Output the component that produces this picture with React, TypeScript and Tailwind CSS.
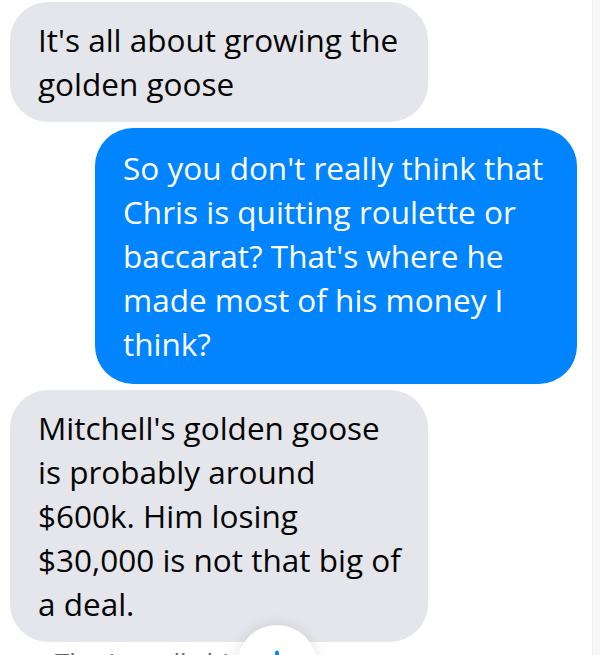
import { ArrowDown } from "lucide-react";

const font = { fontFamily: "'Open Sans', 'Noto Sans', sans-serif" };

function Bubble({ lines, mine }: { lines: string[]; mine?: boolean }) {
  return (
    <div
      className={
        mine
          ? "self-end mr-[15px] w-[482px] rounded-[38px] bg-[#0084ff] text-white px-[28px] py-[18px]"
          : "self-start ml-[10px] w-[418px] rounded-[38px] bg-[#e4e6eb] text-[#050505] px-[28px] py-4"
      }
    >
      {lines.map((l) => (
        <div key={l} className="whitespace-nowrap text-[31.5px] leading-[44px]">
          {l}
        </div>
      ))}
    </div>
  );
}

export default function App() {
  return (
    <div className="relative w-[600px] h-[655px] overflow-hidden bg-white flex" style={font}>
      <div className="flex-1 flex flex-col gap-[6px] pt-[2px]">
        <Bubble lines={["It's all about growing the", "golden goose"]} />
        <Bubble
          mine
          lines={[
            "So you don't really think that",
            "Chris is quitting roulette or",
            "baccarat? That's where he",
            "made most of his money I",
            "think?",
          ]}
        />
        <Bubble
          lines={[
            "Mitchell's golden goose",
            "is probably around",
            "$600k. Him losing",
            "$30,000 is not that big of",
            "a deal.",
          ]}
        />
        <div className="-mt-[1px] pl-[55px] text-[26px] leading-[30px] text-[#65676b] whitespace-nowrap">
          That's really his ball
        </div>
      </div>
      <div className="w-[8px] bg-[#f7f7f7] border-l border-[#f0f0f0]" />

      {/* scroll-to-bottom button */}
      <div className="absolute left-[237px] top-[625px] w-[80px] h-[80px] rounded-full bg-white shadow-[0_0_14px_rgba(0,0,0,0.12)] flex justify-center pt-[21px]">
        <ArrowDown size={30} strokeWidth={3} color="#0084ff" />
      </div>
    </div>
  );
}
